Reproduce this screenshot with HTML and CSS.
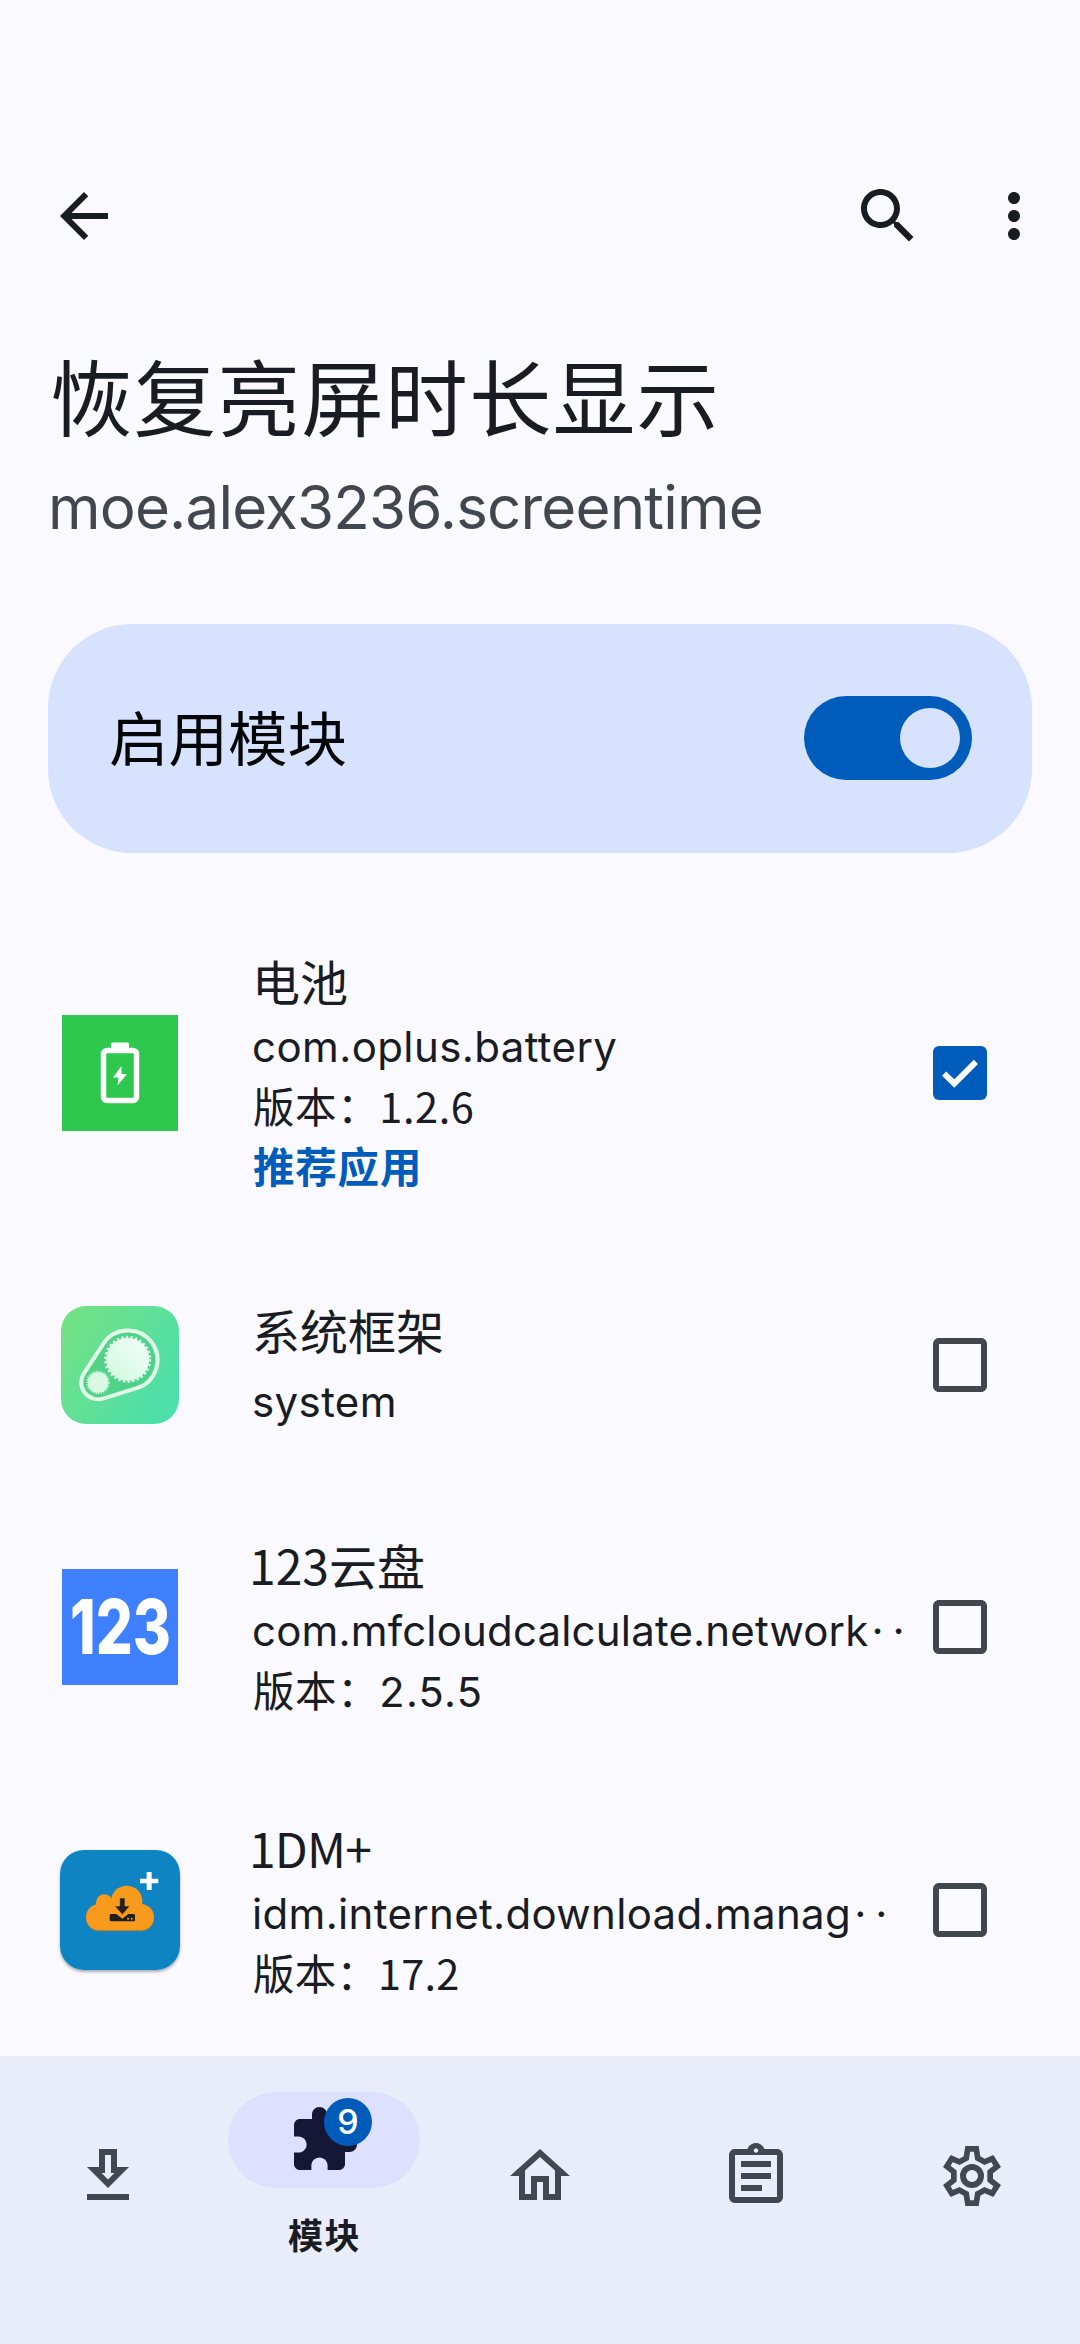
FILE: index.html
```html
<!DOCTYPE html>
<html lang="zh-CN">
<head>
<meta charset="utf-8">
<title>恢复亮屏时长显示</title>
<link rel="stylesheet" href="styles.css">
</head>
<body>
<div class="screen">
  <header class="app-bar">
    <svg class="icon" viewBox="0 0 24 24"><path d="M20 11H7.83l5.59-5.59L12 4l-8 8 8 8 1.41-1.41L7.83 13H20v-2z"/></svg>
    <div class="actions">
      <svg class="icon" viewBox="0 0 24 24"><path d="M15.5 14h-.79l-.28-.27C15.41 12.59 16 11.11 16 9.5 16 5.91 13.09 3 9.5 3S3 5.91 3 9.5 5.91 16 9.5 16c1.61 0 3.09-.59 4.23-1.57l.27.28v.79l5 4.99L20.49 19l-4.99-5zm-6 0C7.01 14 5 11.99 5 9.5S7.01 5 9.5 5 14 7.01 14 9.5 11.99 14 9.5 14z"/></svg>
      <svg class="icon" viewBox="0 0 24 24"><path d="M12 8c1.1 0 2-.9 2-2s-.9-2-2-2-2 .9-2 2 .9 2 2 2zm0 2c-1.1 0-2 .9-2 2s.9 2 2 2 2-.9 2-2-.9-2-2-2zm0 6c-1.1 0-2 .9-2 2s.9 2 2 2 2-.9 2-2-.9-2-2-2z"/></svg>
    </div>
  </header>

  <section class="heading">
    <h1 class="title">恢复亮屏时长显示</h1>
    <p class="subtitle">moe.alex3236.screentime</p>
  </section>

  <section class="enable-card">
    <span class="enable-label">启用模块</span>
    <span class="switch"><span class="thumb"></span></span>
  </section>

  <main class="app-list">
    <article class="row">
      <svg class="app-icon" viewBox="0 0 120 120">
        <rect x="2" y="2" width="116" height="116" fill="#2dc84d"/>
        <path d="M52.500 31h15v6h-15z" fill="#fff" stroke="#fff" stroke-width="3" stroke-linejoin="round"/>
        <rect x="43.500" y="37.500" width="33" height="50" rx="3.500" fill="none" stroke="#fff" stroke-width="5.500"/>
        <path d="M61.500 53l-8.500 11.500h5.500l-1 8 9.500-11.500h-5.500z" fill="#fff"/>
      </svg>
      <div class="info">
        <h2 class="name">电池</h2>
        <p class="package">com.oplus.battery</p>
        <p class="version">版本：1.2.6</p>
        <p class="recommended">推荐应用</p>
      </div>
      <svg class="icon check checked" viewBox="0 0 24 24"><rect x="3" y="3" width="18" height="18" rx="2"/><path class="tick" d="M6.700 12.200l3.400 3.300 7.200-7.200"/></svg>
    </article>

    <article class="row">
      <svg class="app-icon" viewBox="0 0 120 120">
        <defs>
          <linearGradient id="frame" x1="0" y1="0.100" x2="1" y2="0.750"><stop offset="0" stop-color="#75e183"/><stop offset="1" stop-color="#4bdfac"/></linearGradient>
          <linearGradient id="cog" x1="0" y1="1" x2="1" y2="0"><stop offset="0" stop-color="#cff8dd"/><stop offset="1" stop-color="#f3fffb"/></linearGradient>
        </defs>
        <rect x="1" y="1" width="118" height="118" rx="25" fill="url(#frame)"/>
        <path d="M43.300 38.800A29.500 29.500 0 1 1 76.700 83.200L42.900 93.600A16.800 16.800 0 0 1 24 68.300z" fill="#45c67c" fill-opacity=".55" stroke="#e0fbe7" stroke-width="4" stroke-linejoin="round"/>
        <circle cx="67.700" cy="54.300" r="21.500" fill="url(#cog)"/>
        <circle cx="67.700" cy="54.300" r="22" fill="none" stroke="#e0fbea" stroke-width="3" stroke-dasharray="2.300 2.300"/>
        <circle cx="38" cy="77.500" r="10.500" fill="#d9f9e3"/>
        <circle cx="38" cy="77.500" r="11" fill="none" stroke="#d3f8df" stroke-width="1.500" stroke-dasharray="1.300 1.300"/>
      </svg>
      <div class="info info-short">
        <h2 class="name">系统框架</h2>
        <p class="package">system</p>
      </div>
      <svg class="icon check" viewBox="0 0 24 24"><path d="M19 5v14H5V5h14m0-2H5c-1.100 0-2 .9-2 2v14c0 1.100.9 2 2 2h14c1.100 0 2-.9 2-2V5c0-1.100-.9-2-2-2z"/></svg>
    </article>

    <article class="row">
      <svg class="app-icon" viewBox="0 0 120 120">
        <rect x="2" y="2" width="116" height="116" fill="#3e80ff"/>
        <text class="logo-digits" x="10" y="87" textLength="101" lengthAdjust="spacingAndGlyphs">123</text>
      </svg>
      <div class="info">
        <h2 class="name name-numeric">123云盘</h2>
        <p class="package package-cloud">com.mfcloudcalculate.network<span class="dots">··</span></p>
        <p class="version">版本：<span class="wide-digits">2.5.5</span></p>
      </div>
      <svg class="icon check" viewBox="0 0 24 24"><path d="M19 5v14H5V5h14m0-2H5c-1.100 0-2 .9-2 2v14c0 1.100.9 2 2 2h14c1.100 0 2-.9 2-2V5c0-1.100-.9-2-2-2z"/></svg>
    </article>

    <article class="row">
      <svg class="app-icon app-icon-raised" viewBox="24 24 360 360">
        <defs>
          <g id="cloud">
            <circle cx="141" cy="225" r="39"/><circle cx="267" cy="225" r="39"/>
            <circle cx="224" cy="178" r="47"/><circle cx="157" cy="182" r="25"/>
            <path d="M141 190h126v74H141z"/>
          </g>
        </defs>
        <rect x="24" y="24" width="360" height="360" rx="72" fill="#0e84c3"/>
        <use href="#cloud" y="4" fill="#a87f3c"/>
        <use href="#cloud" fill="#f89a1c"/>
        <path d="M264 110h20V90h15v20h20v14h-20v20h-15v-20h-20z" fill="#fff"/>
        <path d="M177 216h16l18 14 18-14h16q4 0 4 4v15q0 3-4 3h-68q-4 0-4-3v-15q0-4 4-4z" fill="#20201e"/>
        <path d="M203 168h16v24h15l-23 26-23-26h15z" fill="#20201e" stroke="#f89a1c" stroke-width="2"/>
        <circle cx="228" cy="230" r="3" fill="#f89a1c"/><circle cx="239" cy="230" r="3" fill="#f89a1c"/>
      </svg>
      <div class="info">
        <h2 class="name name-numeric name-tight">1DM+</h2>
        <p class="package package-idm">idm.internet.download.manag<span class="dots">··</span></p>
        <p class="version version-tight">版本：17.2</p>
      </div>
      <svg class="icon check" viewBox="0 0 24 24"><path d="M19 5v14H5V5h14m0-2H5c-1.100 0-2 .9-2 2v14c0 1.100.9 2 2 2h14c1.100 0 2-.9 2-2V5c0-1.100-.9-2-2-2z"/></svg>
    </article>
  </main>

  <nav class="bottom-nav">
    <a class="nav-item"><svg class="icon" viewBox="0 0 24 24"><path d="M13 5v6h1.170L12 13.170 9.830 11H11V5h2m2-2H9v6H5l7 7 7-7h-4V3zm4 15H5v2h14v-2z"/></svg></a>
    <a class="nav-item nav-active">
      <span class="pill">
        <svg class="icon" viewBox="0 0 24 24"><path d="M20.500 11H19V7c0-1.100-.9-2-2-2h-4V3.500C13 2.120 11.880 1 10.500 1S8 2.120 8 3.500V5H4c-1.100 0-1.990.9-1.990 2v3.800H3.500c1.490 0 2.700 1.210 2.700 2.700s-1.210 2.700-2.700 2.700H2V20c0 1.100.9 2 2 2h3.800v-1.500c0-1.490 1.210-2.700 2.700-2.700 1.490 0 2.700 1.210 2.700 2.700V22H17c1.100 0 2-.9 2-2v-4h1.500c1.380 0 2.500-1.120 2.500-2.500S21.880 11 20.500 11z"/></svg>
        <span class="badge">9</span>
      </span>
      <span class="nav-label">模块</span>
    </a>
    <a class="nav-item"><svg class="icon" viewBox="0 0 24 24"><path d="M12 5.690l5 4.500V18h-2v-6H9v6H7v-7.810l5-4.500M12 3L2 12h3v8h6v-6h2v6h6v-8h3L12 3z"/></svg></a>
    <a class="nav-item"><svg class="icon" viewBox="0 0 24 24"><path d="M7 15h7v2H7zm0-4h10v2H7zm0-4h10v2H7zm12-4h-4.180C14.400 1.840 13.300 1 12 1c-1.300 0-2.400.84-2.820 2H5c-.14 0-.27.01-.4.04-.39.08-.74.28-1.010.55-.18.18-.33.4-.43.64-.1.230-.16.490-.16.770v14c0 .27.06.54.16.78s.25.45.43.64c.27.27.62.47 1.010.55.13.02.26.03.4.03h14c1.100 0 2-.9 2-2V5c0-1.100-.9-2-2-2zm-7-.25c.41 0 .75.34.75.75s-.34.75-.75.75-.75-.34-.75-.75.34-.75.75-.75zM19 19H5V5h14v14z"/></svg></a>
    <a class="nav-item">
      <svg class="icon" viewBox="18 18 216 216">
        <defs><path id="gear" d="M106 36H146L151 67 164 74 190 63 213 99 189 118V134L213 153 190 189 164 178 151 185 146 216H106L101 185 88 178 62 189 39 153 63 134V118L39 99 62 63 88 74 101 67z"/><clipPath id="gear-clip"><use href="#gear"/></clipPath></defs>
        <use href="#gear" class="gear-line" clip-path="url(#gear-clip)"/>
        <circle cx="126" cy="126" r="27" class="gear-hub"/>
      </svg>
    </a>
  </nav>
</div>
</body>
</html>
```
FILE: styles.css
```css
* { box-sizing: border-box; }

body {
  margin: 0;
  background: #faf9ff;
  color: #191c22;
  font-family: "Noto Sans CJK SC", "Noto Sans", sans-serif;
}

h1, h2, p { margin: 0; font-weight: 400; white-space: nowrap; }

.screen {
  display: flex;
  flex-direction: column;
  width: 1080px;
  height: 2344px;
  overflow: hidden;
}

.icon { display: block; width: 72px; height: 72px; fill: currentColor; flex: none; }

.app-bar {
  display: flex;
  justify-content: space-between;
  height: 252px;
  padding: 180px 30px 0 48px;
}

.actions { display: flex; gap: 54px; }

.heading { height: 372px; padding: 82px 48px 0; }
.title { padding-left: 2px; font-size: 82.5px; line-height: 120px; letter-spacing: 1.3px; }
.subtitle {
  margin-top: 13px;
  color: #42474f;
  font-family: Inter, sans-serif;
  font-size: 60px;
  line-height: 80px;
  letter-spacing: -.8px;
}

.enable-card {
  display: flex;
  align-items: center;
  justify-content: space-between;
  height: 229px;
  margin: 0 48px;
  padding: 0 60px 1px 61px;
  border-radius: 84px;
  background: #d7e2fe;
}
.enable-label { padding-bottom: 7px; color: #050608; font-size: 59.5px; line-height: 80px; }
.switch {
  display: flex;
  align-items: center;
  justify-content: flex-end;
  width: 168px;
  height: 84px;
  padding-right: 12px;
  border-radius: 42px;
  background: #005cba;
}
.thumb { width: 60px; height: 60px; border-radius: 50%; background: #d7e2fe; }

.app-list { flex: 1; padding-top: 48.5px; }
.row {
  display: flex;
  align-items: center;
  padding: 45.5px 84px 45.5px 60px;
}
.app-icon { flex: none; width: 120px; height: 120px; overflow: visible; }
.app-icon-raised { border-radius: 24px; box-shadow: 0 2px 3px rgba(0, 0, 0, .3); }
.logo-digits { fill: #fff; font-family: Inter, sans-serif; font-size: 75px; font-weight: 800; }
.info { flex: 1; margin-left: 72px; padding-bottom: 4px; min-width: 0; }
.info-short { padding: 6px 0 8px; }
.info-short .name { margin-bottom: 10px; }
.name { margin-bottom: 4px; font-size: 48px; line-height: 66px; }
.name-numeric { margin-left: -3px; }
.name-tight { letter-spacing: -.8px; }
.package {
  margin-bottom: -2px;
  font-family: Inter, sans-serif;
  font-size: 42px;
  line-height: 60px;
  letter-spacing: .4px;
}
.info-short .package { margin-bottom: 0; }
.package-cloud { letter-spacing: .17px; }
.package-idm { letter-spacing: .33px; }
.version, .recommended { padding-left: 1px; font-size: 41.5px; line-height: 60px; letter-spacing: .6px; }
.version + .recommended { letter-spacing: .8px; }
.version-tight { letter-spacing: .2px; }
.wide-digits { font-family: Inter, sans-serif; line-height: 1; letter-spacing: 1.3px; }
.recommended { color: #005cba; font-weight: 700; }
.dots { margin-left: 3px; letter-spacing: 9px; }
.check { color: #42474f; }
.checked { color: #005cba; }
.tick { fill: none; stroke: #fff; stroke-width: 2; }

.bottom-nav {
  display: grid;
  grid-template-columns: repeat(5, 1fr);
  height: 288px;
  background: #e9edf9;
  color: #434751;
}
.nav-item { display: flex; flex-direction: column; align-items: center; padding-top: 84px; }
.nav-active { padding-top: 36px; color: #141736; }
.pill {
  position: relative;
  display: flex;
  align-items: center;
  justify-content: center;
  width: 192px;
  height: 96px;
  border-radius: 48px;
  background: #dde0ff;
}
.badge {
  position: absolute;
  left: 96px;
  top: 6px;
  width: 48px;
  height: 48px;
  border-radius: 50%;
  background: #005cba;
  color: #fff;
  font: 500 34px/48px Inter, sans-serif;
  text-align: center;
}
.nav-label { margin-top: 20px; padding-left: 1px; color: #191c22; font-size: 35px; font-weight: 700; line-height: 52px; letter-spacing: 1.5px; }
.gear-line { fill: none; stroke: currentColor; stroke-width: 34; }
.gear-hub { fill: none; stroke: currentColor; stroke-width: 18; }
```
